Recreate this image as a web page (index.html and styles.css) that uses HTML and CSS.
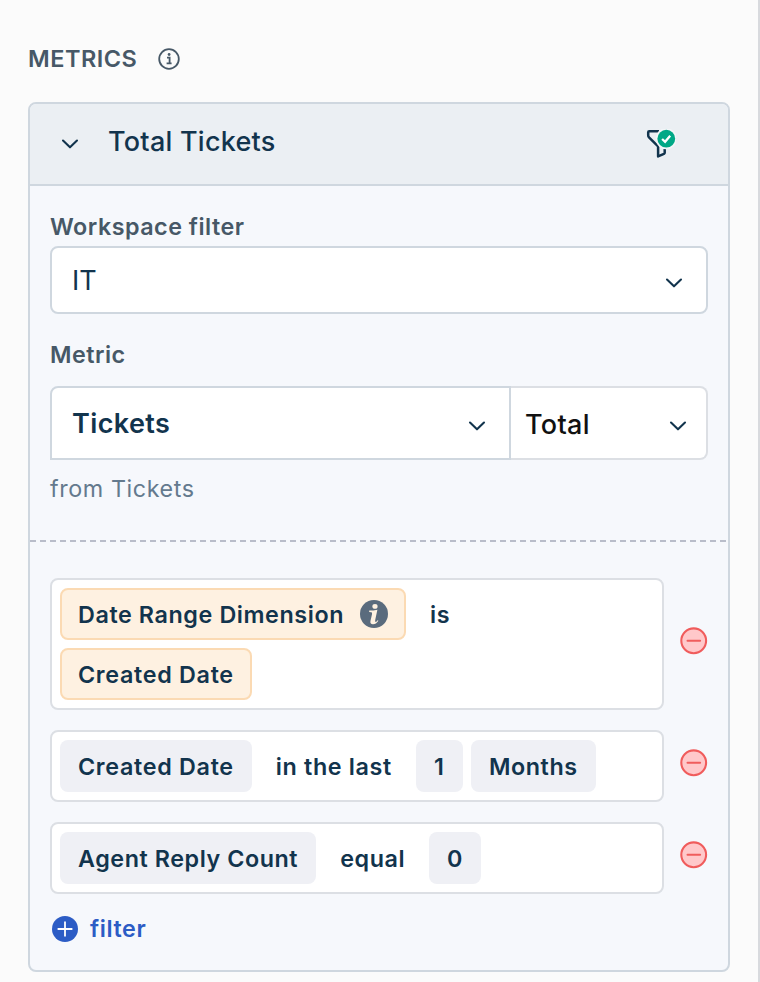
FILE: index.html
```html
<!DOCTYPE html>
<html lang="en">
<head>
<meta charset="utf-8">
<title>Metrics</title>
<link rel="stylesheet" href="styles.css">
</head>
<body>
<svg class="defs" width="0" height="0" aria-hidden="true">
  <symbol id="chevron" viewBox="0 0 18 12"><path d="M2 2.6 9 9.3 16 2.6" fill="none" stroke="currentColor" stroke-width="2.1" stroke-linecap="round" stroke-linejoin="round"/></symbol>
  <symbol id="minus" viewBox="0 0 28 28"><circle cx="13.7" cy="13.8" r="12.4" fill="#ffc8ca" stroke="#f05c5c" stroke-width="2.1"/><path d="M7.5 13.8h12.6" stroke="#f05c5c" stroke-width="2" stroke-linecap="round"/></symbol>
</svg>
<main class="panel">
  <div class="heading">
    <h2 class="heading-text">METRICS</h2>
    <svg class="info" viewBox="0 0 22 22"><circle cx="11" cy="11" r="9.8" fill="none" stroke="#475867" stroke-width="1.8"/><circle cx="11.1" cy="6.5" r="1.4" fill="#475867"/><path d="M9 9.6h2.6v5.6M8.6 15.3h5" fill="none" stroke="#475867" stroke-width="1.8"/></svg>
  </div>
  <section class="card">
    <header class="card-head">
      <svg class="chevron"><use href="#chevron"/></svg>
      <h3 class="title">Total Tickets</h3>
      <svg class="funnel" viewBox="0 0 30 30"><path d="M13 2.2H3.2Q2.2 2.2 2.2 3.2V6.6Q2.2 7.6 3 8.3L12.1 17.3V27.4L17.9 24.9Q18.7 24.5 18.7 23.7V20" fill="none" stroke="#12344d" stroke-width="2.5" stroke-linejoin="round"/><circle cx="20.3" cy="9.7" r="10.6" fill="#f3f6f8"/><circle cx="20.3" cy="9.7" r="8.9" fill="#00a886"/><path d="m16.1 10 3 2.8 5.1-6" fill="none" stroke="#fff" stroke-width="2.3"/></svg>
    </header>
    <div class="fields">
      <label class="label">Workspace filter</label>
      <div class="select workspace"><span class="value">IT</span><svg class="chevron"><use href="#chevron"/></svg></div>
      <label class="label metric-label">Metric</label>
      <div class="metric-row">
        <div class="select metric"><span class="value strong">Tickets</span><svg class="chevron"><use href="#chevron"/></svg></div>
        <div class="select aggregate"><span class="value">Total</span><svg class="chevron"><use href="#chevron"/></svg></div>
      </div>
      <p class="source">from Tickets</p>
    </div>
    <div class="filters">
      <div class="filter">
        <div class="box">
          <span class="chip accent dimension">Date Range Dimension
            <svg class="info-solid" viewBox="0 0 28 28"><circle cx="14" cy="14" r="14" fill="#5a6b7d"/><ellipse cx="15" cy="6.4" rx="2.6" ry="2.4" fill="#fef1e1"/><path d="M9.3 10.6Q13.3 10.6 17.4 9.7L15.2 20Q14.9 21.9 15.7 21.9 16.6 21.8 17.6 20.2L18.4 20.8Q16 24.4 12.9 24.3 9.7 24 10.5 20.8L12 14.3Q12.4 12.4 11.3 12.3L9.1 12.1Z" fill="#fef1e1"/></svg>
          </span>
          <span class="operator">is</span>
          <span class="chip accent created">Created Date</span>
        </div>
        <svg class="remove"><use href="#minus"/></svg>
      </div>
      <div class="filter">
        <div class="box">
          <span class="chip created">Created Date</span>
          <span class="operator period">in the last</span>
          <span class="chip amount">1</span>
          <span class="chip">Months</span>
        </div>
        <svg class="remove"><use href="#minus"/></svg>
      </div>
      <div class="filter">
        <div class="box">
          <span class="chip">Agent Reply Count</span>
          <span class="operator">equal</span>
          <span class="chip">0</span>
        </div>
        <svg class="remove"><use href="#minus"/></svg>
      </div>
      <div class="add">
        <svg class="plus" viewBox="0 0 26 26"><circle cx="13" cy="13" r="13" fill="#2c5cc5"/><path d="M13 5.6v14.8M5.6 13h14.8" stroke="#fff" stroke-width="1.8"/></svg>
        <span class="add-text">filter</span>
      </div>
    </div>
  </section>
</main>
</body>
</html>
```
FILE: styles.css
```css
* { box-sizing: border-box; }

body {
  margin: 0;
  background: #fbfbfb;
  color: #12344d;
  font-family: Inter, "Liberation Sans", sans-serif;
  font-size: 23.3px;
}

h2, h3, p { margin: 0; }
svg { display: block; flex: none; }
.defs { position: absolute; }

.panel {
  width: 760px;
  height: 982px;
  padding: 43px 28px 0;
  border-right: 2px solid #d8dade;
}

.heading { display: flex; align-items: center; height: 32px; }
.heading-text {
  width: 130px;
  padding-bottom: 1px;
  font-size: 23.5px;
  font-weight: 600;
  letter-spacing: 0.5px;
  color: #475867;
}
.info { width: 22px; height: 22px; }

.card {
  width: 702px;
  height: 870px;
  margin-top: 27px;
  background: #f6f8fc;
  border: 2px solid #cfd7df;
  border-radius: 8px;
  overflow: hidden;
}
.card-head {
  display: flex;
  align-items: center;
  height: 82px;
  padding: 0 52px 4px 31px;
  background: #ebeff3;
  border-bottom: 2px solid #cfd7df;
}
.chevron { width: 18px; height: 12px; color: #12344d; }
.card-head .chevron { margin-top: 4px; }
.title {
  flex: 1;
  margin-left: 29px;
  padding-bottom: 2px;
  font-size: 27px;
  font-weight: 500;
  letter-spacing: 0.25px;
}
.funnel { width: 30px; height: 30px; margin-top: 3px; }

.fields { height: 354px; padding: 27px 20px 0; }
.label {
  display: block;
  height: 28px;
  line-height: 28px;
  font-weight: 600;
  letter-spacing: 0.5px;
  color: #475867;
}
.select {
  display: flex;
  align-items: center;
  justify-content: space-between;
  background: #fff;
  border: 2px solid #cfd7df;
  font-size: 27px;
}
.workspace { height: 68px; margin-top: 5px; padding: 0 23px 0 20px; border-radius: 8px; }
.workspace .chevron { margin-top: 5px; }
.metric-label { margin-top: 27px; }
.metric-row { display: flex; height: 74px; margin-top: 17px; }
.metric { width: 461px; padding: 0 23px 0 20px; border-radius: 8px 0 0 0; }
.aggregate {
  width: 197px;
  padding: 0 19px 0 14px;
  border-color: #dcdfe4;
  border-left: 0;
  border-radius: 0 8px 8px 0;
  color: #111;
}
.metric .chevron, .aggregate .chevron { margin-top: 5px; }
.aggregate .value { margin-top: 2px; font-weight: 500; letter-spacing: 0.3px; }
.strong { font-weight: 600; letter-spacing: 0.4px; }
.source { height: 28px; margin-top: 15px; line-height: 28px; letter-spacing: 0.6px; color: #647a8e; }

.filters {
  height: 430px;
  padding: 38px 20px 0;
  background: repeating-linear-gradient(90deg, #b9bdca 0 6px, transparent 6px 10px) 0 0 / 100% 2px no-repeat;
}
.filter { display: flex; align-items: center; gap: 16px; margin-bottom: 20px; }
.box {
  display: flex;
  flex-wrap: wrap;
  gap: 8px;
  width: 614px;
  padding: 8px;
  background: #fff;
  border: 2px solid #dcdfe4;
  border-radius: 8px;
}
.chip {
  display: flex;
  align-items: center;
  height: 52px;
  padding: 0 18px;
  background: #eff0f5;
  border-radius: 8px;
  font-weight: 600;
  letter-spacing: 0.57px;
}
.accent { padding: 0 16px; background: #fef1e1; border: 2px solid #fbdab3; }
.created { letter-spacing: 0.7px; }
.dimension { letter-spacing: 0.6px; }
.info-solid { width: 28px; height: 28px; margin-left: 16px; }
.operator { padding: 0 16px; line-height: 54px; height: 52px; font-weight: 600; letter-spacing: 0.57px; }
.period { letter-spacing: 0.65px; }
.amount { width: 47px; }
.remove { width: 28px; height: 28px; margin-bottom: 6px; }

.add {
  display: flex;
  align-items: center;
  gap: 12px;
  height: 30px;
  padding-left: 2px;
  color: #2c5cc5;
  font-weight: 600;
  letter-spacing: 0.6px;
}
.add-text { padding-bottom: 2px; }
.plus { width: 26px; height: 26px; }
```
